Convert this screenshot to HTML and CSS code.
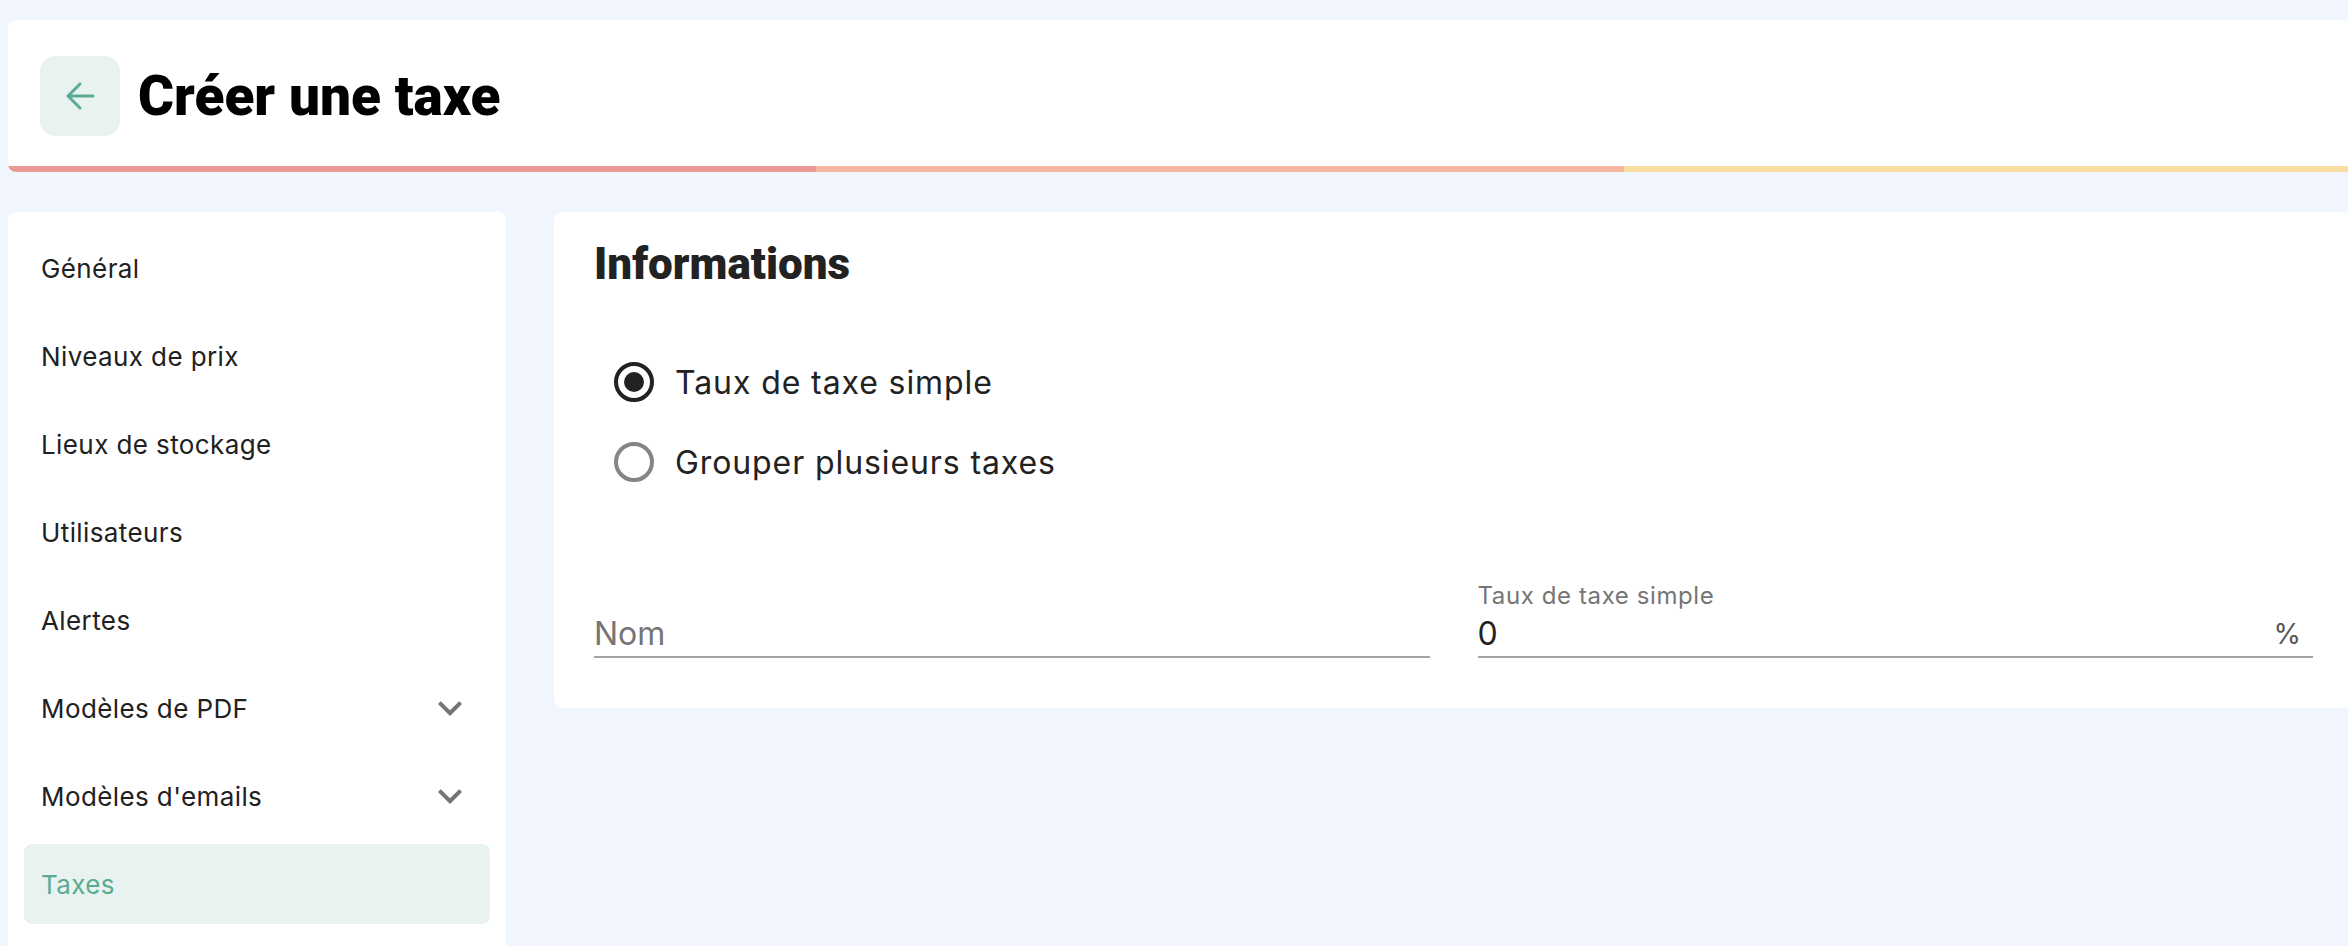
FILE: index.html
```html
<!DOCTYPE html>
<html lang="fr">
<head>
    <meta charset="utf-8">
    <title>Créer une taxe</title>
    <meta name="viewport" content="width=device-width, initial-scale=1">
    <link rel="stylesheet" href="styles.css">
</head>
<body>
<div class="page">
    <header class="topbar">
        <div class="topbar-main">
            <a class="back-btn" href="#">
                <svg width="30" height="28" viewBox="0 0 30 28">
                    <path d="M28 14H3 M15 2 L3 14 L15 26" fill="none" stroke="currentColor" stroke-width="3" stroke-linecap="round" stroke-linejoin="round"/>
                </svg>
            </a>
            <h1>Créer une taxe</h1>
        </div>
        <div class="progress">
            <span class="step step-1"></span>
            <span class="step step-2"></span>
            <span class="step step-3"></span>
        </div>
    </header>

    <div class="layout">
        <nav class="side-menu">
            <a class="menu-item" href="#">Général</a>
            <a class="menu-item" href="#">Niveaux de prix</a>
            <a class="menu-item" href="#">Lieux de stockage</a>
            <a class="menu-item" href="#">Utilisateurs</a>
            <a class="menu-item" href="#">Alertes</a>
            <a class="menu-item" href="#">Modèles de PDF
                <svg class="chevron" width="48" height="48" viewBox="0 0 24 24"><path d="M16.59 8.59 12 13.17 7.41 8.59 6 10l6 6 6-6z"/></svg>
            </a>
            <a class="menu-item" href="#">Modèles d'emails
                <svg class="chevron" width="48" height="48" viewBox="0 0 24 24"><path d="M16.59 8.59 12 13.17 7.41 8.59 6 10l6 6 6-6z"/></svg>
            </a>
            <a class="menu-item active" href="#">Taxes</a>
        </nav>

        <main class="panel">
            <h2>Informations</h2>

            <div class="radio-group">
                <label class="radio-row">
                    <span class="radio checked"></span>
                    Taux de taxe simple
                </label>
                <label class="radio-row">
                    <span class="radio"></span>
                    Grouper plusieurs taxes
                </label>
            </div>

            <div class="fields">
                <div class="field">
                    <div class="field-label">&nbsp;</div>
                    <div class="field-input">
                        <span class="placeholder">Nom</span>
                    </div>
                </div>
                <div class="field">
                    <div class="field-label">Taux de taxe simple</div>
                    <div class="field-input">
                        <span class="value">0</span>
                        <span class="suffix">%</span>
                    </div>
                </div>
            </div>
        </main>
    </div>
</div>
</body>
</html>
```

FILE: styles.css
```css
html, body {
    margin: 0;
    height: 100%;
    overflow: hidden;
}

body {
    background: #f1f5fd;
    color: #222;
    font: 26px Inter, 'Noto Sans', sans-serif;
}

.page {
    width: 2345px;
    padding: 20px 8px 0;
}

/* en-tête */
.topbar {
    background: #fff;
    border-radius: 8px;
    overflow: hidden;
}

.topbar-main {
    display: flex;
    align-items: center;
    gap: 18px;
    padding: 36px 32px 30px;
}

.back-btn {
    display: flex;
    align-items: center;
    justify-content: center;
    width: 80px;
    height: 80px;
    border-radius: 15px;
    background: #e8f3f0;
    color: #5aab95;
}

.topbar h1 {
    margin: 0;
    font: 900 55px/60px Roboto, sans-serif;
    color: #000;
}

.progress {
    display: flex;
    height: 6px;
}

.step {
    flex: 0 0 808px;
}

.step-1 { background: #e99a93; }
.step-2 { background: #f6b8a1; }
.step-3 { background: #f9dea2; }

/* corps */
.layout {
    display: flex;
    align-items: flex-start;
    gap: 48px;
    margin-top: 40px;
}

.side-menu {
    flex: 0 0 498px;
    box-sizing: border-box;
    min-height: 780px;
    padding: 16px;
    background: #fff;
    border-radius: 8px;
    display: flex;
    flex-direction: column;
    gap: 8px;
}

.menu-item {
    display: flex;
    align-items: center;
    justify-content: space-between;
    height: 80px;
    padding: 0 16px 0 17px;
    border-radius: 8px;
    color: #212121;
    text-decoration: none;
    letter-spacing: 0.4px;
}

.menu-item.active {
    background: #e8f3f0;
    color: #5aab95;
}

.chevron {
    fill: #757575;
}

.panel {
    flex: 1;
    padding: 26px 40px 50px;
    background: #fff;
    border-radius: 8px;
}

.panel h2 {
    margin: 0;
    font: 900 44px/52px Roboto, sans-serif;
    color: #222;
}

.radio-group {
    margin-top: 52px;
}

.radio-row {
    display: flex;
    align-items: center;
    gap: 21px;
    height: 80px;
    padding-left: 20px;
    font-size: 32px;
    letter-spacing: 0.9px;
    color: #222;
}

.radio {
    box-sizing: border-box;
    width: 40px;
    height: 40px;
    border: 4px solid #858585;
    border-radius: 50%;
    display: flex;
    align-items: center;
    justify-content: center;
}

.radio.checked {
    border: 4.5px solid #222;
}

.radio.checked::after {
    content: '';
    width: 20px;
    height: 20px;
    border-radius: 50%;
    background: #222;
}

.fields {
    display: grid;
    grid-template-columns: 1fr 1fr;
    gap: 48px;
    margin-top: 78px;
}

.field-label {
    font-size: 24px;
    line-height: 32px;
    letter-spacing: 0.6px;
    color: #757575;
}

.field-input {
    display: flex;
    justify-content: space-between;
    height: 44px;
    line-height: 44px;
    font-size: 32px;
    border-bottom: 2px solid #a3a3a3;
}

.placeholder {
    color: #757575;
}

.value {
    color: #222;
}

.suffix {
    font-size: 28px;
    color: #555;
    padding-right: 12px;
}
```
